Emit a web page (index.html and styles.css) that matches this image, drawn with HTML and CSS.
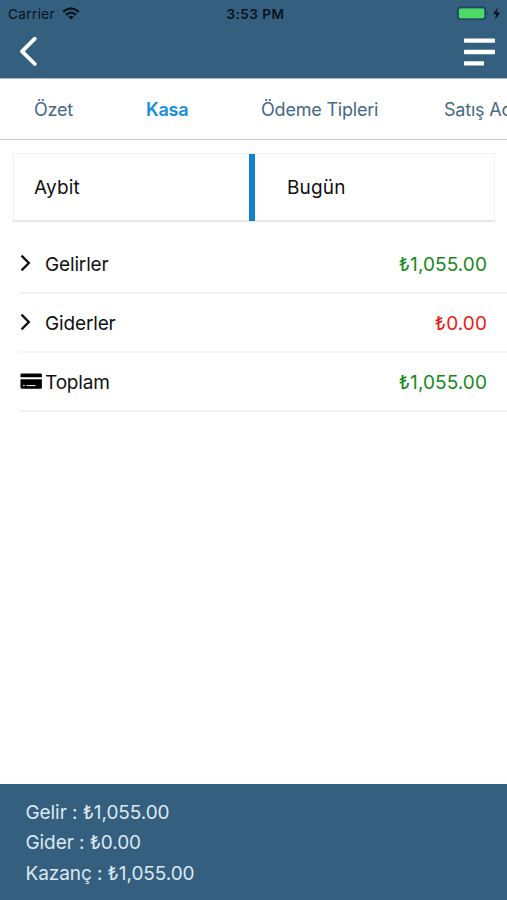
FILE: index.html
```html
<!DOCTYPE html>
<html lang="tr">
<head>
<meta charset="utf-8">
<title>Kasa</title>
<link rel="stylesheet" href="styles.css">
</head>
<body>
<div class="app">
  <header class="header">
    <div class="status">
      <div class="carrier"><span>Carrier</span>
        <svg class="wifi" width="18" height="13" viewBox="0 0 18 13" fill="none" stroke="#05121c" stroke-width="2.3"><path d="M1.2 4.8Q9-2 16.8 4.8M4 7.8Q9 3.4 14 7.8"/><path d="M6.2 9.8Q9 7.5 11.8 9.8L9 12.5Z" fill="#05121c" stroke="none"/></svg>
      </div>
      <span class="time">3:53 PM</span>
      <div class="power">
        <svg width="46" height="16" viewBox="0 0 46 16"><rect x=".8" y="1.2" width="27.6" height="12" rx="2.5" fill="none" stroke="#1b4260" stroke-width="1.2"/><rect x="2" y="2.4" width="25.2" height="9.8" rx="1.5" fill="#4cd964"/><path d="M30.2 5.4q2 1.7 0 3.6z" fill="#1b4260"/><path d="M40.8 1.5 36 8.1h3.2l-1.2 5.6 5.2-7.2h-3.5z" fill="#05121c"/></svg>
      </div>
    </div>
    <nav class="bar">
      <svg width="20" height="32" viewBox="0 0 20 32" fill="none" stroke="#fff" stroke-width="3.8" stroke-linecap="round" stroke-linejoin="round"><path d="M16.8 2.7 4 15.3 16.8 28"/></svg>
      <svg width="31" height="30" viewBox="0 0 31 30" fill="#fff"><rect y="1.4" width="31" height="4.4" rx=".7"/><rect y="12.8" width="31" height="4.4" rx=".7"/><rect y="24.2" width="20" height="4.4" rx=".7"/></svg>
    </nav>
  </header>
  <nav class="tabs">
    <span class="tab ozet">Özet</span>
    <span class="tab active">Kasa</span>
    <span class="tab odeme">Ödeme Tipleri</span>
    <span class="tab satis">Satış Adet</span>
  </nav>
  <section class="filters">
    <div class="filter">Aybit</div>
    <div class="filter period">Bugün</div>
  </section>
  <main class="list">
    <div class="row"><svg class="icon" width="25" height="20" viewBox="0 0 25 20" fill="none" stroke="#111" stroke-width="2.4"><path d="M1.5 1.7 8.8 9 1.5 16.3"/></svg><span class="label">Gelirler</span><span class="amount">₺1,055.00</span></div>
    <div class="row"><svg class="icon" width="25" height="20" viewBox="0 0 25 20" fill="none" stroke="#111" stroke-width="2.4"><path d="M1.5 1.7 8.8 9 1.5 16.3"/></svg><span class="label">Giderler</span><span class="amount expense">₺0.00</span></div>
    <div class="row"><svg class="icon" width="25" height="20" viewBox="0 0 25 20"><path d="M1.7 1.4h19q1.2 0 1.2 1.2v2.6H.5V2.6Q.5 1.4 1.7 1.4zM.5 7.2h21.4v8.4q0 1.2-1.2 1.2h-19q-1.2 0-1.2-1.2z"/><path d="M3 13.6h1.8M6.5 13.6h9" stroke="#fff" stroke-width="1"/></svg><span class="label">Toplam</span><span class="amount">₺1,055.00</span></div>
  </main>
  <footer class="summary">
    <div>Gelir : ₺1,055.00</div>
    <div>Gider : ₺0.00</div>
    <div>Kazanç : ₺1,055.00</div>
  </footer>
</div>
</body>
</html>
```
FILE: styles.css
```css
* { box-sizing: border-box; }
body { margin: 0; background: #fff; color: #111; font-family: Inter, "Liberation Sans", sans-serif; font-size: 19px; }
svg { display: block; flex: none; }
.app { width: 507px; height: 900px; display: flex; flex-direction: column; overflow: hidden; }
.header { height: 79px; background: #345f7f; border-bottom: 1px solid #a9bdca; flex: none; }
.status { height: 27px; display: grid; grid-template-columns: 1fr auto 1fr; align-items: center; padding: 0 4px 0 8px; color: #05121c; font-size: 13.5px; }
.carrier { display: flex; align-items: center; gap: 7px; letter-spacing: .4px; }
.wifi { margin-top: -1px; }
.time { font-weight: 600; letter-spacing: .5px; }
.power { justify-self: end; }
.bar { height: 50px; display: flex; justify-content: space-between; align-items: center; padding: 0 12px 0 18px; }
.tabs { height: 61px; flex: none; display: flex; align-items: center; padding-left: 34px; border-bottom: 1px solid #c9c9c9; color: #456987; font-size: 18px; white-space: nowrap; overflow: hidden; }
.tab { flex: none; letter-spacing: -.2px; }
.ozet { width: 112px; }
.active { width: 115px; color: #168ede; font-weight: 600; }
.odeme { width: 183px; }
.filters { height: 69px; flex: none; margin: 13px 12px 0 13px; display: grid; grid-template-columns: 235px 1fr; border: 1px solid #f1f1f1; border-bottom: 2px solid #e7e7e7; }
.filter { display: flex; align-items: center; padding-left: 20px; letter-spacing: .15px; }
.period { border-left: 6px solid #0f83cf; padding-left: 32px; margin-bottom: -1px; }
.list { padding: 13px 0 0 19px; flex: 1; }
.row { height: 59px; display: flex; align-items: center; padding: 1px 20px 0 1px; border-bottom: 2px solid #f3f3f3; }
.label { flex: 1; padding-top: 1px; letter-spacing: -.15px; }
.amount { padding-top: 1px; letter-spacing: .08px; color: #168a1c; }
.expense { color: #ef1717; }
.summary { height: 116px; flex: none; background: #345f7f; color: #dce8f2; padding: 13.5px 25px 0 25.5px; line-height: 30.5px; letter-spacing: -.08px; }
```
